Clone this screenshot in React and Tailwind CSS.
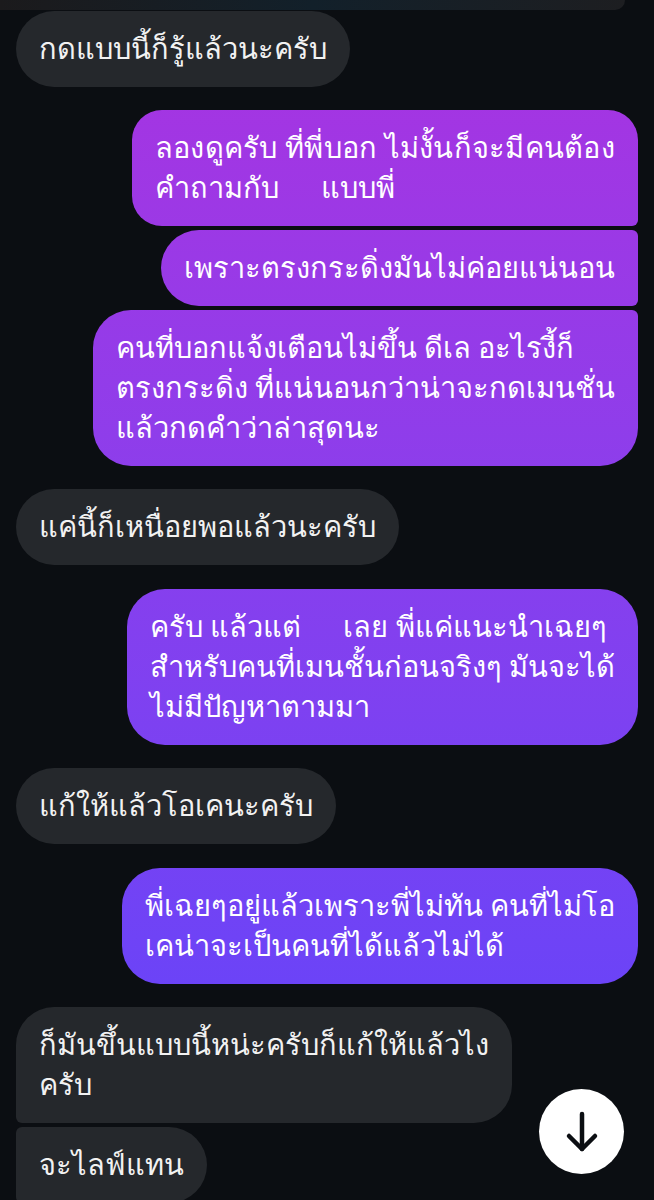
const sent =
  "bg-fixed bg-linear-to-b from-[#a932e0] to-[#5c44fc] text-white self-end whitespace-nowrap px-[23px] py-[18px]";
const recv =
  "bg-[#25282c] text-[#f2f2f2] self-start whitespace-nowrap px-[23px] py-[18px]";

export default function App() {
  return (
    <div className="relative h-[1200px] w-full overflow-hidden bg-[#0b0e12] font-['Roboto',sans-serif] text-[29px] leading-[40px]">
      <div className="mr-[29px] h-[10px] rounded-br-[16px] bg-linear-to-r from-[#1b1a1c] via-[#12202a] to-[#1d1e21]" />

      <div className="flex flex-col px-[16px] pt-[1px]">
        <div className={`${recv} rounded-[38px]`}>กดแบบนี้ก็รู้แล้วนะครับ</div>

        <div className={`${sent} mt-[23px] rounded-[30px] rounded-br-[6px]`}>
          <span className="tracking-[0.25px]">ลองดูครับ ที่พี่บอก ไม่งั้นก็จะมีคนต้อง</span>
          <br />
          คำถามกับ <span className="inline-block w-[28px]" /> แบบพี่
        </div>
        <div className={`${sent} mt-[4px] rounded-l-[38px] rounded-r-[6px]`}>
          เพราะตรงกระดิ่งมันไม่ค่อยแน่นอน
        </div>
        <div className={`${sent} mt-[4px] rounded-[38px] rounded-tr-[6px]`}>
          คนที่บอกแจ้งเตือนไม่ขึ้น ดีเล อะไรงี้ก็
          <br />
          ตรงกระดิ่ง ที่แน่นอนกว่าน่าจะกดเมนชั่น
          <br />
          แล้วกดคำว่าล่าสุดนะ
        </div>

        <div className={`${recv} mt-[23px] rounded-[38px]`}>แค่นี้ก็เหนื่อยพอแล้วนะครับ</div>

        <div className={`${sent} mt-[24px] rounded-[38px]`}>
          ครับ แล้วแต่ <span className="inline-block w-[28px]" /> เลย พี่แค่แนะนำเฉยๆ
          <br />
          สำหรับคนที่เมนชั้นก่อนจริงๆ มันจะได้
          <br />
          ไม่มีปัญหาตามมา
        </div>

        <div className={`${recv} mt-[23px] rounded-[38px]`}>แก้ให้แล้วโอเคนะครับ</div>

        <div className={`${sent} mt-[24px] rounded-[38px]`}>
          พี่เฉยๆอยู่แล้วเพราะพี่ไม่ทัน คนที่ไม่โอ
          <br />
          เคน่าจะเป็นคนที่ได้แล้วไม่ได้
        </div>

        <div className={`${recv} mt-[23px] rounded-[38px] rounded-bl-[6px]`}>
          ก็มันขึ้นแบบนี้หน่ะครับก็แก้ให้แล้วไง
          <br />
          ครับ
        </div>
        <div className={`${recv} mt-[4px] rounded-r-[38px] rounded-l-[6px]`}>จะไลฟ์แทน</div>
      </div>

      <button className="absolute left-[539px] top-[1089px] flex h-[85px] w-[85px] items-center justify-center rounded-full bg-white">
        <svg width="36" height="44" viewBox="0 0 36 44" fill="none" stroke="#0b0e12" strokeWidth="4.5" strokeLinecap="round" strokeLinejoin="round">
          <path d="M18 4v35" />
          <path d="M5 26l13 13 13-13" />
        </svg>
      </button>
    </div>
  );
}
